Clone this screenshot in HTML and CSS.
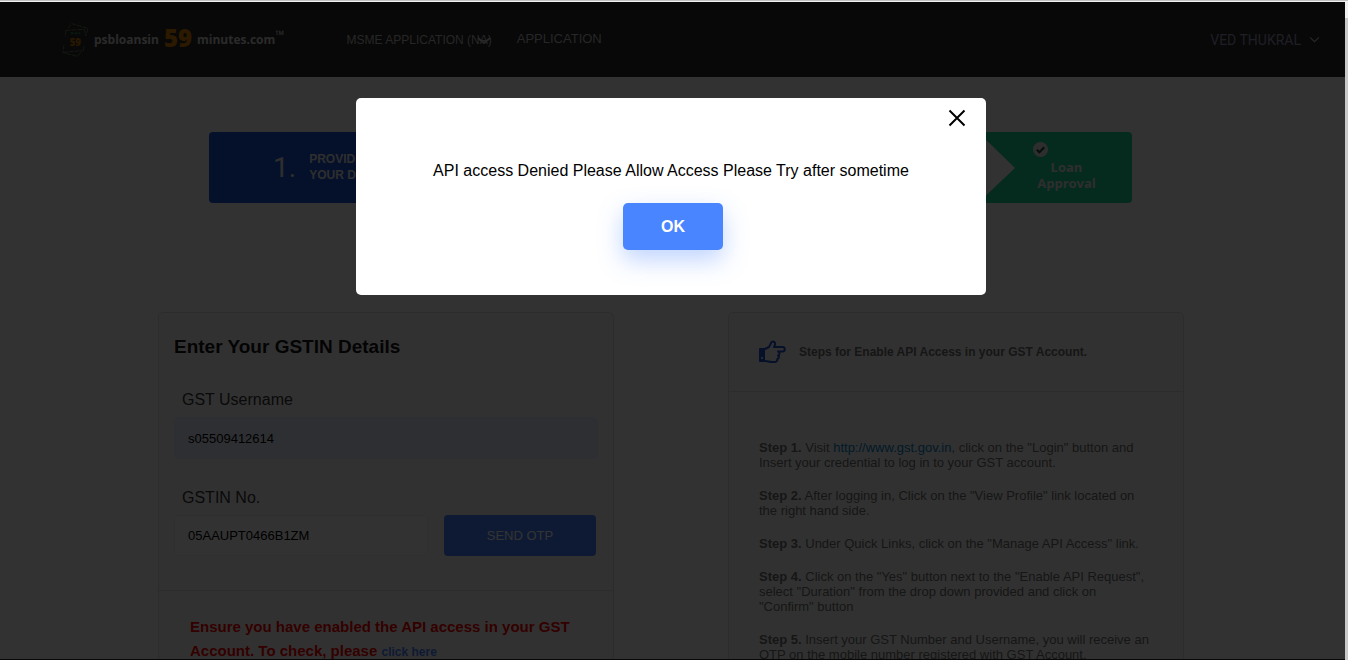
FILE: index.html
```html
<!DOCTYPE html>
<html lang="en">
<head>
<meta charset="utf-8">
<title>psbloansin59minutes - GSTIN Details</title>
<link rel="stylesheet" href="styles.css">
</head>
<body>
<div class="page">
  <header class="topbar">
    <a class="brand" href="#">
      <svg class="brand-mark" viewBox="0 0 28 36" aria-hidden="true">
        <g fill="none" stroke="#5a7a50" stroke-width="1">
          <path d="M6 6 L10 1 L27 6 L25 13" stroke-dasharray="5 1"/>
          <path d="M4 8 L23 7 L25 14 M23 24 L22 30" stroke-dasharray="5 1"/>
          <path d="M4 8 L3 15 M2 23 L1 31 L16 35 L21 29 M1 31 L8 30 L21 29" stroke-dasharray="5 1"/>
        </g>
        <path d="M9 11h10" stroke="#2f7a50" stroke-width="2" stroke-dasharray="3 1"/>
        <text x="8" y="24" class="brand-mark-text">59</text>
      </svg>
      <span class="brand-word">psbloansin</span>
      <span class="brand-number">59</span>
      <span class="brand-word">minutes.com<sup class="brand-tm">™</sup></span>
    </a>
    <nav class="nav">
      <a class="nav-link nav-link-small" href="#">MSME APPLICATION (NA)
        <svg class="nav-chevron" viewBox="0 0 14 8" aria-hidden="true"><path d="M1 1l6 5 6-5"/></svg>
      </a>
      <a class="nav-link" href="#">APPLICATION</a>
    </nav>
    <button class="user" type="button">VED THUKRAL
      <svg class="user-chevron" viewBox="0 0 10 6" aria-hidden="true"><path d="M1 1l4 4 4-4"/></svg>
    </button>
  </header>

  <main class="content">
    <ol class="progress">
      <li class="stage stage-active">
        <span class="stage-number">1.</span>
        <span class="stage-name">PROVIDE<br>YOUR DATA</span>
      </li>
      <li class="stage stage-final">
        <svg class="stage-notch" viewBox="0 0 36 71" preserveAspectRatio="none" aria-hidden="true"><path d="M0 0L36 36L0 71z" fill="#fafafa"/></svg>
        <svg class="stage-check" viewBox="0 0 14 14" aria-hidden="true"><circle cx="7" cy="7" r="7" fill="#e6e6e6"/><path d="M3.6 7.2l2.4 2.4 4.5-4.8" fill="none" stroke="#19503c" stroke-width="2"/></svg>
        <span class="stage-final-name">Loan<br>Approval</span>
      </li>
    </ol>

    <div class="cards">
      <section class="card">
        <form class="gst-form">
          <h2 class="card-title">Enter Your GSTIN Details</h2>
          <label class="label" for="gst-user">GST Username</label>
          <input class="input input-filled" id="gst-user" type="text" value="s05509412614">
          <label class="label label-second" for="gstin">GSTIN No.</label>
          <div class="otp-row">
            <input class="input" id="gstin" type="text" value="05AAUPT0466B1ZM">
            <button class="otp-button" type="button">SEND OTP</button>
          </div>
        </form>
        <p class="notice">Ensure you have enabled the API access in your GST Account. To check, please <a class="notice-link" href="#">click here</a></p>
      </section>

      <section class="card">
        <div class="guide-head">
          <svg class="hand" viewBox="0 0 27 24" aria-hidden="true">
            <path d="M1 9h5v12H1z" fill="#1e50c8"/>
            <path d="M1 9h5l4-2 2-4c.6-2 3.500-2 4 0 .3 1.500-.4 3-1 4h8.500c3 0 3 4.500 0 4.500H19c2 .5 2 3.500 0 4 1.500.8 1 3.300-.8 3.500.6 1.600-.7 3-2.700 3H13c-3 0-4-1-7-1H1z" fill="none" stroke="#1e50c8" stroke-width="2" stroke-linejoin="round"/>
            <circle cx="3" cy="18" r="1" fill="#fafafa"/>
          </svg>
          <h3 class="guide-title">Steps for Enable API Access in your GST Account.</h3>
        </div>
        <div class="guide">
          <p class="guide-step"><b>Step 1.</b> Visit <a class="guide-link" href="#">http://www.gst.gov.in</a>, click on the "Login" button and Insert your credential to log in to your GST account.</p>
          <p class="guide-step"><b>Step 2.</b> After logging in, Click on the "View Profile" link located on the right hand side.</p>
          <p class="guide-step"><b>Step 3.</b> Under Quick Links, click on the "Manage API Access" link.</p>
          <p class="guide-step"><b>Step 4.</b> Click on the "Yes" button next to the "Enable API Request", select "Duration" from the drop down provided and click on "Confirm" button</p>
          <p class="guide-step"><b>Step 5.</b> Insert your GST Number and Username, you will receive an OTP on the mobile number registered with GST Account.</p>
        </div>
      </section>
    </div>
  </main>

  <div class="overlay">
    <div class="dialog" role="dialog" aria-modal="true" aria-labelledby="dialog-text">
      <button class="close" type="button" aria-label="Close">
        <svg class="close-icon" viewBox="0 0 18 18" aria-hidden="true"><path d="M1.500 1.500l15 15M16.500 1.500l-15 15"/></svg>
      </button>
      <p class="dialog-text" id="dialog-text">API access Denied Please Allow Access Please Try after sometime</p>
      <button class="ok" type="button">OK</button>
    </div>
  </div>
</div>
</body>
</html>
```

FILE: styles.css
```css
* { box-sizing: border-box; }

body {
  margin: 0;
  height: 100vh;
  overflow: hidden;
  padding: 2px 3px 1px 0;
  background: linear-gradient(#c0c0c0 1px, #f1f1f1 1px, #f1f1f1 18px, #c8c8c8 18px);
  font-family: "Liberation Sans", Arial, sans-serif;
  color: #333;
}

a { text-decoration: none; }
p, h2, h3, ol { margin: 0; padding: 0; }
button { font-family: inherit; cursor: pointer; border: 0; }

.page {
  position: relative;
  height: 100%;
  overflow: hidden;
  background: #fafafa;
  box-shadow: 0 1px 0 #080808;
}

/* Header */
.topbar {
  display: flex;
  align-items: center;
  height: 75px;
  padding: 0 25px 0 62px;
  background: #282828;
}

.brand {
  display: flex;
  align-items: center;
  gap: 5px;
  font-family: "Open Sans", sans-serif;
  font-weight: 700;
  color: #d2d2d2;
}

.brand-mark { width: 27px; height: 36px; }
.brand-mark-text { font: 800 10px "Open Sans", sans-serif; fill: #c87800; }
.brand-word { font-size: 12px; line-height: 16px; white-space: nowrap; }
.brand-number { font-size: 24px; line-height: 32px; font-weight: 800; color: #dc8200; padding-bottom: 4px; }
.brand-tm { font-size: 12px; line-height: 0; }

.nav { display: flex; align-items: center; margin-left: 62px; }
.nav-link { position: relative; font-size: 13px; line-height: 16px; color: #bebebe; padding-bottom: 2px; white-space: nowrap; }
.nav-link-small { font-size: 12px; margin-right: 25px; padding-bottom: 0; }

.nav-chevron {
  position: absolute;
  right: 1px;
  top: 5px;
  width: 14px;
  height: 8px;
  fill: none;
  stroke: #c8c8c8;
  stroke-width: 2;
}

.user {
  display: flex;
  align-items: center;
  gap: 8px;
  margin-left: auto;
  padding: 0;
  background: none;
  font: 14px/16px Roboto, sans-serif;
  color: #9696b4;
}

.user-chevron { width: 11px; height: 7px; fill: none; stroke: #c8c8d2; stroke-width: 1; }

/* Main column */
.content { max-width: 1143px; margin: 0 auto; padding: 55px 3px 0 0; }

.progress {
  display: flex;
  justify-content: space-between;
  margin: 0 109px 109px 108px;
  list-style: none;
}

.stage {
  position: relative;
  display: flex;
  align-items: center;
  height: 71px;
  font-weight: 700;
  color: #e6e6e6;
}

.stage-active { width: 308px; padding-left: 64px; background: #1950d2; border-radius: 4px 0 0 4px; gap: 13px; }
.stage-number { font: 28px/32px Roboto, sans-serif; }
.stage-name { font-size: 12px; line-height: 14px; line-height: 16px; padding-bottom: 2px; }

.stage-final {
  width: 154px;
  flex-direction: column;
  align-items: center;
  justify-content: flex-end;
  padding: 0 0 12px 23px;
  background: #19d296;
  border-radius: 0 4px 4px 0;
}

.stage-notch { position: absolute; left: 0; top: 0; width: 37px; height: 71px; }
.stage-check { position: absolute; left: 55px; top: 10px; width: 15px; height: 15px; }
.stage-final-name { font: 700 13px/16px "Open Sans", sans-serif; text-align: center; }

.cards {
  display: grid;
  grid-template-columns: 1fr 1fr;
  gap: 114px;
  padding: 0 57px;
}

.card { border: 1px solid #dcdce1; border-radius: 5px; background: #f6f6f6; }

/* GSTIN form */
.gst-form { padding: 22px 15px 34px; border-bottom: 1px solid #dcdce1; }
.card-title { margin-bottom: 31px; font-size: 19px; line-height: 24px; color: #141414; }
.label { display: block; margin: 0 8px 7px; font-size: 16px; line-height: 20px; color: #333; }
.label-second { margin-top: 29px; }

.input {
  display: block;
  width: 100%;
  height: 42px;
  padding: 0 13px;
  border: 1px solid #ebebf0;
  border-radius: 4px;
  background: #fafafa;
  font: 13px "Liberation Sans", Arial, sans-serif;
  color: #000;
}

.input-filled { background: #e6ebfa; border-color: #e6ebfa; }
.otp-row { display: flex; gap: 16px; padding-right: 2px; }
.otp-row .input { flex: 1; min-width: 0; height: 41px; }
.otp-button { width: 152px; border-radius: 4px; background: #4682ff; color: #fff; font-size: 13px; }

.notice { padding: 24px 31px; font-size: 15px; line-height: 24px; font-weight: 700; color: #ff0000; }
.notice-link { font-size: 12px; color: #4682ff; }

/* API access guide */
.guide-head { display: flex; align-items: center; gap: 13px; height: 79px; padding: 0 30px; border-bottom: 1px solid #dcdce1; }
.hand { width: 27px; height: 24px; }
.guide-title { font-size: 12px; line-height: 16px; color: #6e6e6e; }
.guide { padding: 48px 31px 48px 30px; }
.guide-step { margin-bottom: 18px; font-size: 13px; line-height: 15px; color: #6e6e6e; }
.guide-link { color: #0082c8; }

/* Alert dialog */
.overlay {
  position: absolute;
  inset: 0;
  display: flex;
  justify-content: center;
  align-items: flex-start;
  padding: 96px 3px 0 0;
  background: rgba(0, 0, 0, 0.8);
}

.dialog {
  display: flex;
  flex-direction: column;
  align-items: center;
  position: relative;
  width: 630px;
  padding: 61px 24px 45px;
  border-radius: 5px;
  background: #fff;
}

.close { position: absolute; right: 20px; top: 11px; padding: 0; background: none; }
.close-icon { display: block; width: 18px; height: 18px; stroke: #000; stroke-width: 2; }
.dialog-text { font-size: 16px; line-height: 24px; color: #000; }

.ok {
  width: 100px;
  height: 47px;
  margin-top: 20px;
  margin-left: 4px;
  border-radius: 5px;
  background: #4885ff;
  box-shadow: 0 10px 24px rgba(72, 133, 255, 0.35);
  color: #fff;
  font-size: 16px;
  font-weight: 700;
}
```
